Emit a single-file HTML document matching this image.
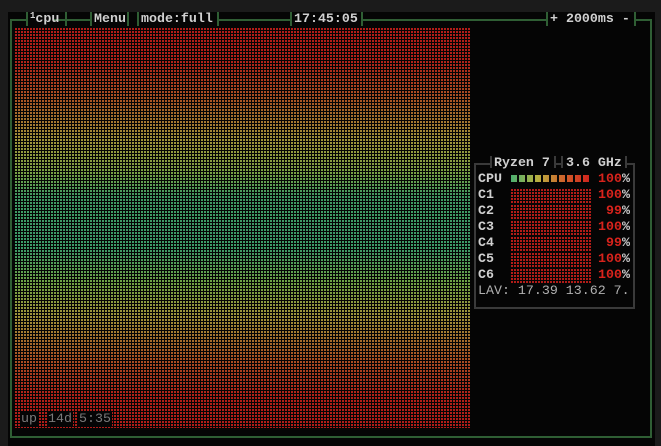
<!DOCTYPE html>
<html><head><meta charset="utf-8"><style>
*{margin:0;padding:0;box-sizing:border-box}
html,body{width:661px;height:446px;overflow:hidden;background:#1b1b1b;font-family:"Liberation Mono","DejaVu Sans Mono",monospace;font-size:13.3px;font-weight:bold}
.term{position:absolute;left:8px;top:12px;width:647px;height:434px;background:#050505}
.box{position:absolute;left:10px;top:19px;width:642px;height:419px;border:2px solid #2f5e34;border-top:none}
.hl{position:absolute;height:2px;background:#2f5e34}
.tick{position:absolute;width:2px;background:#2f5e34}
.t{position:absolute;color:#d0d0d0;line-height:16px;white-space:pre}
.graph{position:absolute;left:15px;top:28px;width:456px;height:400px;
background:linear-gradient(to bottom,#b01c18 0%,#b02018 8%,#a85424 18%,#a0943a 28%,#7aa044 36%,#409a62 42%,#3c9a68 55%,#70a044 64%,#a0943a 72%,#a85424 82%,#b02018 92%,#b01c18 100%)}
.dots{position:absolute;inset:0;background:
repeating-linear-gradient(to right,transparent 0 2px,#050505 2px 3px),
repeating-linear-gradient(to bottom,transparent 0 2px,#050505 2px 3px)}
.sub{position:absolute;left:474px;top:164px;width:161px;height:145px;border:2px solid #3a3a3a;border-top:none}
.core{position:absolute;left:511px;width:80px;height:14px;background:#b01c18}
.r{color:#d8231c}
.g{color:#9a9a9a;font-weight:normal}
</style></head><body>
<div class="term"></div>
<div class="box"></div>
<div class="hl" style="left:10px;top:19px;width:16px"></div>
<div class="hl" style="left:54px;top:19px;width:36px"></div>
<div class="hl" style="left:218px;top:19px;width:72px"></div>
<div class="hl" style="left:362px;top:19px;width:184px"></div>
<div class="hl" style="left:635px;top:19px;width:17px"></div>
<div class="tick" style="left:26px;top:12px;height:14px"></div>
<div class="tick" style="left:65px;top:12px;height:14px"></div>
<div class="tick" style="left:90px;top:12px;height:14px"></div>
<div class="tick" style="left:127px;top:12px;height:14px"></div>
<div class="tick" style="left:137px;top:12px;height:14px"></div>
<div class="tick" style="left:217px;top:12px;height:14px"></div>
<div class="tick" style="left:290px;top:12px;height:14px"></div>
<div class="tick" style="left:361px;top:12px;height:14px"></div>
<div class="tick" style="left:546px;top:12px;height:14px"></div>
<div class="tick" style="left:634px;top:12px;height:14px"></div>
<div class="t" style="left:30px;top:11px"><span style="font-size:9px;position:relative;top:-4px">1</span>cpu</div>
<div class="t" style="left:94px;top:11px">Menu</div>
<div class="t" style="left:141px;top:11px">mode:full</div>
<div class="t" style="left:294px;top:11px">17:45:05</div>
<div class="t" style="left:550px;top:11px">+ 2000ms -</div>

<div class="graph"><div class="dots"></div></div>
<div class="t g" style="left:20px;top:411px;background:#050505;padding:0 1px;color:#7a7a7a">up</div>
<div class="t g" style="left:47px;top:411px;background:#050505;padding:0 1px;color:#7a7a7a">14d</div>
<div class="t g" style="left:78px;top:411px;background:#050505;padding:0 1px;color:#7a7a7a">5:35</div>

<div class="sub"></div>
<div class="hl" style="left:474px;top:163px;width:16px;background:#3a3a3a"></div>
<div class="hl" style="left:554px;top:163px;width:8px;background:#3a3a3a"></div>
<div class="hl" style="left:626px;top:163px;width:9px;background:#3a3a3a"></div>
<div class="tick" style="left:490px;top:156px;height:12px;background:#3a3a3a"></div>
<div class="tick" style="left:554px;top:156px;height:12px;background:#3a3a3a"></div>
<div class="tick" style="left:561px;top:156px;height:12px;background:#3a3a3a"></div>
<div class="tick" style="left:625px;top:156px;height:12px;background:#3a3a3a"></div>
<div class="t" style="left:494px;top:155px">Ryzen 7</div>
<div class="t" style="left:566px;top:155px">3.6 GHz</div>
<div class="t" style="left:478px;top:171px">CPU</div>
<div style="position:absolute;left:511px;top:175px;width:80px;height:7px;background:repeating-linear-gradient(to right,transparent 0 6px,#050505 6px 8px),linear-gradient(to right,#4cb070,#b8b040,#d0602a,#d0201c)"></div>
<div class="t" style="left:598px;top:171px"><span class="r">100</span>%</div>
<div class="t" style="left:478px;top:187px">C1</div><div class="core" style="top:189px"><div class="dots"></div></div><div class="t" style="left:598px;top:187px"><span class="r">100</span>%</div>
<div class="t" style="left:478px;top:203px">C2</div><div class="core" style="top:205px"><div class="dots"></div></div><div class="t" style="left:606px;top:203px"><span class="r">99</span>%</div>
<div class="t" style="left:478px;top:219px">C3</div><div class="core" style="top:221px"><div class="dots"></div></div><div class="t" style="left:598px;top:219px"><span class="r">100</span>%</div>
<div class="t" style="left:478px;top:235px">C4</div><div class="core" style="top:237px"><div class="dots"></div></div><div class="t" style="left:606px;top:235px"><span class="r">99</span>%</div>
<div class="t" style="left:478px;top:251px">C5</div><div class="core" style="top:253px"><div class="dots"></div></div><div class="t" style="left:598px;top:251px"><span class="r">100</span>%</div>
<div class="t" style="left:478px;top:267px">C6</div><div class="core" style="top:269px"><div class="dots"></div></div><div class="t" style="left:598px;top:267px"><span class="r">100</span>%</div>
<div class="t g" style="left:478px;top:283px;color:#b0b0b0">LAV: 17.39 13.62 7.</div>
</body></html>
